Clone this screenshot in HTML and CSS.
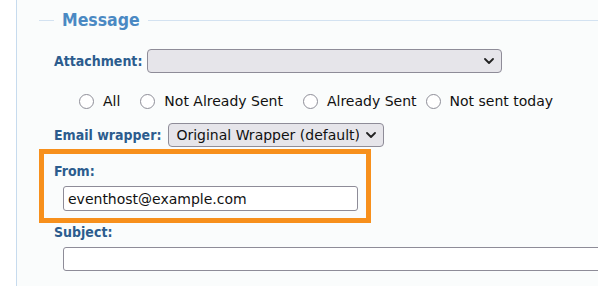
FILE: index.html
```html
<!DOCTYPE html>
<html>
<head>
<meta charset="utf-8">
<link rel="stylesheet" href="styles.css">
</head>
<body>
<div class="panel">
  <fieldset class="group">
    <legend class="group-title">Message</legend>
    <div class="row row-attach">
      <label class="label" for="att">Attachment:</label>
      <div class="select-wrap select-attach">
        <select id="att" class="select"><option></option></select>
        <svg class="chev" width="10" height="6" viewBox="0 0 10 6"><path d="M1 1 L5 5 L9 1" fill="none" stroke="#222" stroke-width="1.8" stroke-linecap="round" stroke-linejoin="round"/></svg>
      </div>
    </div>
    <div class="row radios">
      <label class="radio-item"><input type="radio" name="r" class="radio"><span>All</span></label>
      <label class="radio-item"><input type="radio" name="r" class="radio"><span>Not Already Sent</span></label>
      <label class="radio-item"><input type="radio" name="r" class="radio"><span>Already Sent</span></label>
      <label class="radio-item"><input type="radio" name="r" class="radio"><span>Not sent today</span></label>
    </div>
    <div class="row row-wrapper">
      <label class="label" for="wr">Email wrapper:</label>
      <div class="select-wrap select-wrapper">
        <select id="wr" class="select"><option>Original Wrapper (default)</option></select>
        <svg class="chev" width="10" height="6" viewBox="0 0 10 6"><path d="M1 1 L5 5 L9 1" fill="none" stroke="#222" stroke-width="1.8" stroke-linecap="round" stroke-linejoin="round"/></svg>
      </div>
    </div>
    <div class="highlight">
      <label class="label block" for="from">From:</label>
      <input id="from" class="text-input from-input" type="text" value="eventhost@example.com">
    </div>
    <div class="field">
      <label class="label block" for="subj">Subject:</label>
      <input id="subj" class="text-input subject-input" type="text" value="">
    </div>
  </fieldset>
</div>
</body>
</html>
```
FILE: styles.css
```css
html, body {
  margin: 0;
  padding: 0;
  background: #ffffff;
  overflow: hidden;
}
body {
  font-family: "DejaVu Sans", Verdana, sans-serif;
  width: 598px;
  height: 286px;
}
.panel {
  margin-left: 16px;
  border-left: 1px solid #c7dbee;
  background: #fafcfc;
  height: 286px;
  padding: 10px 0 0 22px;
  box-sizing: border-box;
}
.group {
  margin: 0;
  padding: 0 0 0 15px;
  border: 0;
  border-top: 1px solid #d3e2f1;
  min-width: 0;
}
.group-title {
  padding: 0 8px;
  font-family: "DejaVu Sans Condensed", "DejaVu Sans", sans-serif;
  font-weight: bold;
  font-size: 17.5px;
  line-height: 20px;
  color: #4a89c3;
}
.label {
  font-family: "DejaVu Sans Condensed", "DejaVu Sans", sans-serif;
  font-weight: bold;
  font-size: 14px;
  line-height: 16px;
  color: #2c5c8e;
}
.label.block {
  display: block;
}
.row {
  display: flex;
  align-items: center;
}
.row-attach {
  margin-top: 19px;
  gap: 5px;
}
.row-wrapper {
  margin-top: 12px;
  gap: 7px;
}
.select-wrap {
  position: relative;
  height: 24px;
}
.select {
  appearance: none;
  -webkit-appearance: none;
  width: 100%;
  height: 24px;
  margin: 0;
  box-sizing: border-box;
  border: 1px solid #8e8c98;
  border-radius: 4px;
  background: #e6e5ea;
  font-family: "DejaVu Sans", Verdana, sans-serif;
  font-size: 14px;
  color: #111;
  padding: 0 24px 0 7px;
}
.chev {
  position: absolute;
  top: 9px;
  right: 8px;
  pointer-events: none;
}
.select-attach {
  width: 355px;
}
.select-wrapper {
  width: 216px;
}
.radios {
  margin-top: 18px;
  height: 20px;
  padding-left: 25px;
}
.radio-item {
  display: inline-flex;
  align-items: center;
  font-size: 14px;
  color: #111;
  margin-right: 20px;
}
.radio-item:nth-child(3) {
  margin-right: 9px;
}
.radio {
  appearance: none;
  -webkit-appearance: none;
  width: 15px;
  height: 15px;
  margin: 0 9px 0 0;
  border: 1px solid #8e8e98;
  border-radius: 50%;
  background: #ffffff;
  box-sizing: border-box;
}
.highlight {
  margin-top: 2px;
  margin-left: -15px;
  width: 332px;
  box-sizing: border-box;
  border: 5px solid #f7901c;
  padding: 9px 0 7px 10px;
}
.text-input {
  display: block;
  box-sizing: border-box;
  border: 1px solid #8e8c98;
  border-radius: 3px;
  background: #ffffff;
  font-family: "DejaVu Sans", Verdana, sans-serif;
  font-size: 14px;
  color: #111;
  padding: 0 4px;
  margin: 7px 0 0 9px;
}
.from-input {
  width: 295px;
  height: 25px;
}
.field {
  margin-top: 1px;
}
.subject-input {
  width: 600px;
  height: 24px;
}
```
